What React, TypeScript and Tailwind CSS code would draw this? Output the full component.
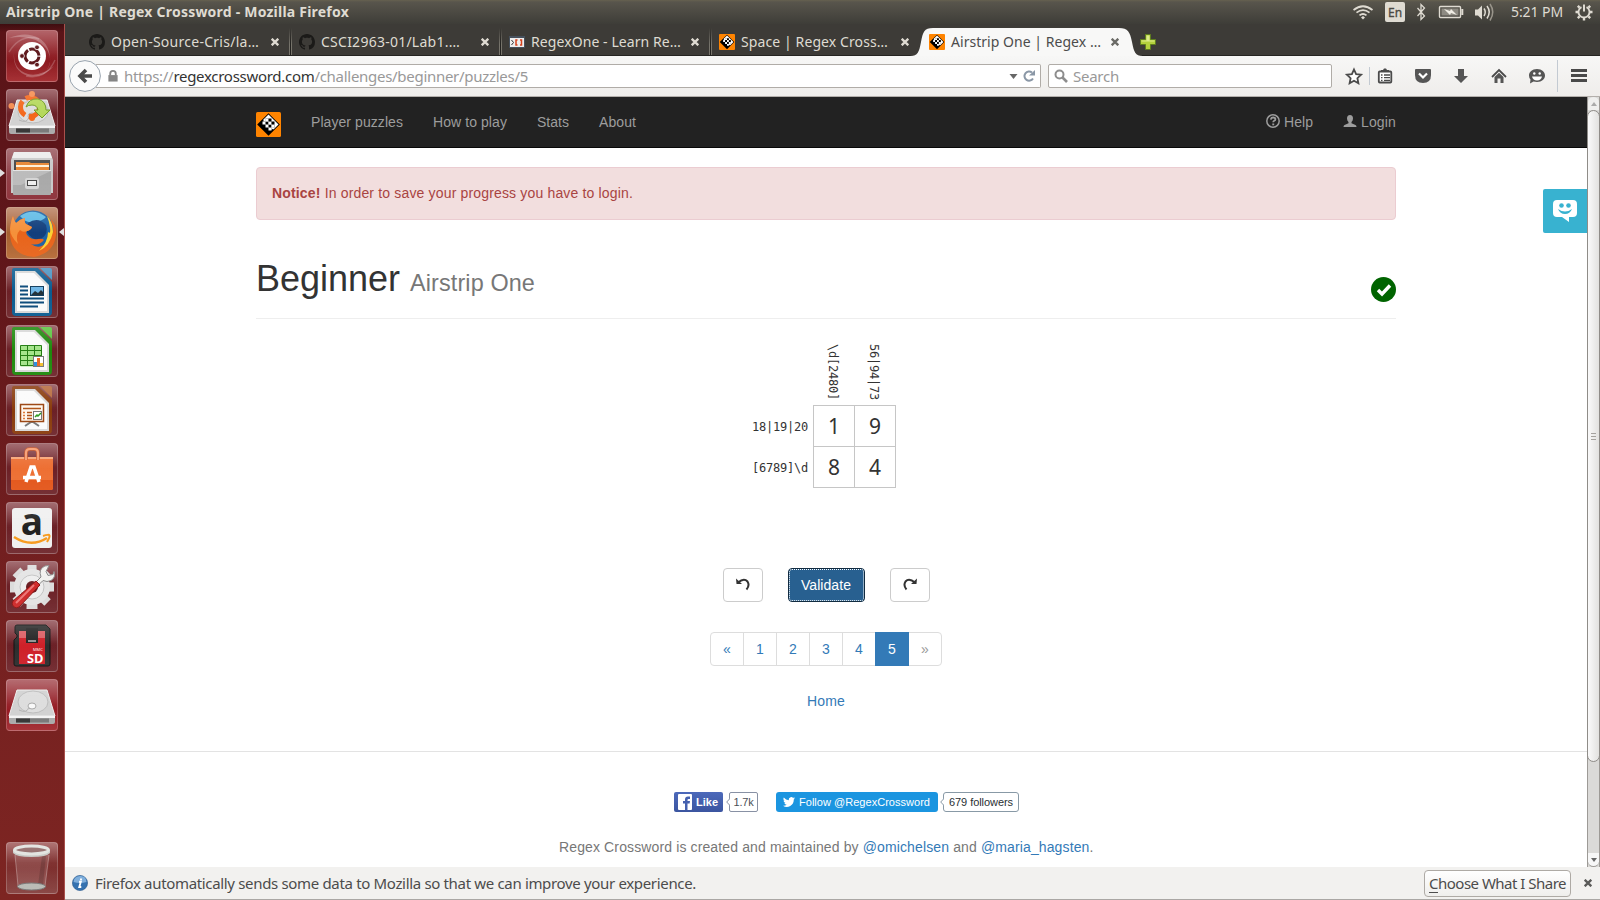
import React, { useLayoutEffect, useRef } from "react";

const UI = "font-['Noto_Sans',sans-serif]";

/* Text run whose letter spacing is adjusted so that it fills a given length. */
function Fit({ w, vertical = false, className = "", children }: { w: number; vertical?: boolean; className?: string; children: React.ReactNode }) {
  const ref = useRef<HTMLSpanElement>(null);
  useLayoutEffect(() => {
    const el = ref.current;
    if (!el) return;
    el.style.letterSpacing = "0px";
    const n = (el.textContent || "").length;
    const box = el.getBoundingClientRect();
    el.style.letterSpacing = `${(w - (vertical ? box.height : box.width)) / n}px`;
  }, [w, vertical]);
  return (
    <span ref={ref} className={`inline-block shrink-0 whitespace-pre ${className}`}>
      {children}
    </span>
  );
}

/* ---------- launcher ---------- */

function Doc({ main, light, children }: { main: string; light: string; children: React.ReactNode }) {
  return (
    <svg viewBox="0 0 52 52" className="size-[52px]">
      <path d="M8 2h24l14 14v30q0 4-4 4H10q-4 0-4-4V4q0-2 2-2z" fill={main} />
      <path d="M34 2h10q2 0 2 2v10z" fill={light} />
      <path d="M9 5h20l14 14v28H9z" fill="#d8d8d8" />
      <path d="M11 7h17l13 13v25H11z" fill="#fbfbfb" />
      <g transform="translate(0 -1)">{children}</g>
    </svg>
  );
}

const Dash = () => (
  <svg viewBox="0 0 52 52" className="size-[52px]">
    <path d="M3 8Q20 1 33 8q12 8 11 24-2 9-8 13Q50 34 40 18 28 4 3 8z" fill="#fff" fillOpacity=".25" />
    <path d="M8 22q-1 18 14 22 12 3 26-8-10 12-26 10Q6 41 8 22z" fill="#fff" fillOpacity=".25" />
    <path d="M3 22Q15 3 33 9M49 30Q40 50 20 46" fill="none" stroke="#fff" strokeOpacity=".2" strokeWidth="1.500" />
    <circle cx="26" cy="26" r="14" fill="#fff" />
    <circle cx="26" cy="26" r="7" fill="none" stroke="#5d171b" strokeWidth="3" strokeDasharray="13.2 1.46" strokeDashoffset="-.7" />
    <circle cx="16" cy="26" r="2.400" fill="#5d171b" stroke="#fff" strokeWidth=".8" />
    <circle cx="31" cy="17.300" r="2.400" fill="#5d171b" stroke="#fff" strokeWidth=".8" />
    <circle cx="31" cy="34.700" r="2.400" fill="#5d171b" stroke="#fff" strokeWidth=".8" />
  </svg>
);

const Drive = ({ installer = false }: { installer?: boolean }) => (
  <svg viewBox="0 0 52 52" className="size-[52px]">
    <path d="M11 11h30l8 26H3z" fill="#d2d2d2" stroke="#efefef" />
    <path d="M3 37h46v6q0 2-2 2H5q-2 0-2-2z" fill="#a9a9a9" />
    <path d="M3 37h46v2H3z" fill="#f4f4f4" />
    <path d="M10 39.500h33v4H10z" fill="#777" />
    <path d="M10 39.500h14v4H10z" fill="#333" />
    <ellipse cx="27" cy="23" rx="15" ry="11" fill="#dedede" stroke="#bdbdbd" />
    <ellipse cx="26" cy="27" rx="4" ry="3" fill="#f9f9f9" stroke="#aaa" />
    <path d="M13 31q8 4 10-3" fill="none" stroke="#b4b4b4" />
    {installer && (
      <g>
        <circle cx="24" cy="18" r="9.500" fill="none" stroke="#f4681c" strokeWidth="5" strokeDasharray="16 4" />
        <circle cx="5.500" cy="17" r="3" fill="#f58b4d" />
        <circle cx="26" cy="5" r="3" fill="#f58b4d" />
        <circle cx="26" cy="29" r="3" fill="#f4681c" />
        <path d="M20 18q3-9 12-8 8 2 8 11h4l-8 8-8-8h4q-1-5-6-5-4 0-6 2z" fill="#b5d95c" stroke="#6f9a23" />
      </g>
    )}
  </svg>
);

const Files = () => (
  <svg viewBox="0 0 52 52" className="size-[52px]">
    <path d="M8 4h36l3 8v33H5V12z" fill="#c9c9c9" />
    <path d="M8 4h36l2 6H6z" fill="#ececec" />
    <path d="M8 12h36v12H8z" fill="#444" />
    <path d="M10 14h13l2 1h18v9H10z" fill="#e7842f" />
    <path d="M10 17h33v2H10z" fill="#fff1d8" />
    <path d="M7 22h38v24q0 1-1 1H8q-1 0-1-1z" fill="#a9a9a9" />
    <path d="M7 22h38v1H7z" fill="#e4e4e4" />
    <path d="M7 23h38l-30 14H7z" fill="#bcbcbc" />
    <rect x="19" y="30" width="14" height="11" rx="2" fill="#d6d6d6" />
    <rect x="21.500" y="32.500" width="9" height="5" fill="#eee" stroke="#444" />
  </svg>
);

const Firefox = () => (
  <svg viewBox="0 0 52 52" className="size-[52px]">
    <circle cx="27" cy="24" r="20.500" fill="#1b62a5" />
    <path d="M14 9Q27 0 40 10q-4 5-12 4-6 4-14-5z" fill="#5fbbe6" />
    <path d="M22 16q10-7 18 2 3 9-5 14-9 2-14-7z" fill="#123f7d" />
    <path d="M7 9q1 5 3 7 4-4 9-5-1 4 1 6l6 3q-1 3-5 4-2 2 1 5 4 4 10 3 5-1 6 1-5 6-13 4 8 6 15-1 6-7 4-17 3 3 3 7 1-8-3-14 7 5 6 16-2 18-22 22Q4 48 4 26 4 15 7 9z" fill="#e8641b" />
    <path d="M7 9q1 5 3 7 4-4 9-5-1 4 1 6l6 3q-1 3-5 4-4 2-7-1-5 5-2 14-8-8-8-15 1-9 3-13z" fill="#f5913a" />
    <path d="M41 9q6 6 6 16-3 14-14 19 9-9 9-19 3 3 2-5-1-6-3-11z" fill="#fcd233" />
  </svg>
);

const Bag = () => (
  <svg viewBox="0 0 52 52" className="size-[52px]">
    <path d="M5 14h42v31q0 2-2 2H7q-2 0-2-2z" fill="#ee7034" />
    <path d="M5 14h42v2H5z" fill="#f8a679" />
    <path d="M5 37h42v8q0 2-2 2H7q-2 0-2-2z" fill="#e4571b" />
    <path d="M20 17v-7q0-4 4-4h4q4 0 4 4v7" fill="none" stroke="#c95020" strokeWidth="3.500" />
    <path d="M20 17v-7q0-4 4-4h4q4 0 4 4v7" fill="none" stroke="#f69a6e" strokeWidth="2.200" />
    <path d="M20 39l5-15h3l5 15M17 34.500h18" fill="none" stroke="#fff" strokeWidth="3.500" />
  </svg>
);

const Amazon = () => (
  <svg viewBox="0 0 52 52" className="size-[52px]">
    <rect x="6" y="6" width="40" height="40" rx="3" fill="#f0f0f0" />
    <text x="26" y="33" textAnchor="middle" fontSize="37" fontWeight="bold" fontFamily="Open Sans" fill="#202020">a</text>
    <path d="M8 35q17 11 33 1" fill="none" stroke="#f79a1c" strokeWidth="2.500" />
    <path d="M37 34q6-2 6.500-.500T41 40" fill="none" stroke="#f79a1c" strokeWidth="2" />
  </svg>
);

const Settings = () => (
  <svg viewBox="0 0 52 52" className="size-[52px]">
    {[0, 45, 90, 135].map((a) => (
      <path key={a} d="M21.500 4h9l1 44H20.500z" fill="#dcdcdc" transform={`rotate(${a} 26 26)`} />
    ))}
    <circle cx="26" cy="26" r="18" fill="#e4e4e4" />
    <circle cx="26" cy="26" r="12" fill="#eee" stroke="#c4c4c4" />
    <circle cx="26" cy="26" r="6" fill="#6a1d22" />
    <path d="M27 24l8-8q-3-8 4-11l4-.500-3 6 2 4 5-1 1-3q2 6-3 9-4 2-8 0l-7 7z" fill="#f2f2ef" stroke="#858585" />
    <path d="M30 20l4 4-21 22q-3 2-5.500-.500T7 40z" fill="#cf2a2a" stroke="#8d1414" />
    <path d="M28 24L10 42" stroke="#ee7777" strokeWidth="2" />
  </svg>
);

const SdCard = () => (
  <svg viewBox="0 0 52 52" className="size-[52px]">
    <path d="M11 5h29l4 4v35q0 2-2 2H10q-2 0-2-2V20l3-3v-2l-2-2V7q0-2 2-2z" fill="#2e2e2e" stroke="#111" />
    <path d="M13 11h26v33H13z" fill="#cf2129" />
    <path d="M13 11h26v7H13z" fill="#dd6066" />
    <path d="M20 8h12v15H20z" fill="#252525" />
    <path d="M22 21h8" stroke="#bbb" strokeWidth="1.500" />
    <text x="27" y="31" fontSize="4" fontFamily="Open Sans" fill="#fff">MMC</text>
    <text x="21" y="42.500" fontSize="12.500" fontWeight="bold" fontFamily="Open Sans" fill="#fff" textLength="16.500" lengthAdjust="spacingAndGlyphs">SD</text>
  </svg>
);

const Trash = () => (
  <svg viewBox="0 0 52 52" className="size-[52px]">
    <path d="M9 13h34l-4 31q-13 6-27 0z" fill="#fff" fillOpacity=".12" />
    <path d="M36 14h4l-3 29h-5z" fill="#000" fillOpacity=".15" />
    <path d="M9 13l3 31M43 13l-4 31" stroke="#fff" strokeOpacity=".3" />
    <ellipse cx="25.500" cy="44.500" rx="14" ry="3.500" fill="#b9bab5" stroke="#777" />
    <path d="M7 8v3q3 4 18.500 4T44 11V8z" fill="#c4c6c2" />
    <ellipse cx="25.500" cy="8" rx="17" ry="4" fill="#8d6463" stroke="#e0e2de" strokeWidth="3" />
  </svg>
);

function Tile({ bg, children }: { bg: string; children: React.ReactNode }) {
  return (
    <div className={`relative size-[52px] shrink-0 rounded-[4px] ${bg}`}>
      {children}
      <div className="pointer-events-none absolute inset-0 rounded-[4px] border border-white/20 bg-linear-to-b from-white/15 via-white/0 to-white/5" />
    </div>
  );
}

const PLAIN = "bg-[linear-gradient(#94555b_0%,#6c2127_45%,#6f262b_100%)]";

function Launcher() {
  return (
    <aside className="relative flex w-[65px] shrink-0 flex-col items-start gap-[7px] border-r border-[#a9504c] bg-[linear-gradient(#3f0d10_0px,#5b1418_8px,#5f161a_220px,#742020_560px,#7d2522_876px)] pt-[6px] pb-[6px] pl-[6px]">
      <Tile bg="bg-[linear-gradient(#a64a50,#8c191f_60%,#a3282c)]"><Dash /></Tile>
      <Tile bg={PLAIN}><Drive installer /></Tile>
      <Tile bg="bg-[linear-gradient(#9a5a60,#8b2c35)]"><Files /></Tile>
      <Tile bg="bg-[linear-gradient(#bb8365,#a55f31_50%,#b66b36)]"><Firefox /></Tile>
      <Tile bg={PLAIN}>
        <Doc main="#0b5c91" light="#4a93c2">
          <path d="M14 21.500h8M14 25.500h8M14 29.500h8M14 33.500h24M14 37.500h24M14 41.500h18" stroke="#0b4a7a" strokeWidth="2" />
          <rect x="24.500" y="21.500" width="13" height="9" fill="#6fb6e6" stroke="#123c5c" />
          <path d="M25 30l4-4 3 2 3-3 2 2v3z" fill="#24323a" />
        </Doc>
      </Tile>
      <Tile bg={PLAIN}>
        <Doc main="#1f8a0d" light="#5ac53f">
          <path d="M14.500 21.500h21v21h-21z" fill="#a5e58b" />
          <path d="M14.500 21.500h21v20h-21zM14.500 26.500h21M14.500 31.500h21M14.500 36.500h21M21.500 21.500v20M28.500 21.500v20" fill="none" stroke="#237c12" />
          <rect x="27.500" y="32.500" width="10" height="10" fill="#fff" stroke="#777" />
          <path d="M28 38h3v4h-3z" fill="#2d8fe0" />
          <path d="M31 34h3v8h-3z" fill="#ea6a25" />
          <path d="M34 39h3v3h-3z" fill="#f4c12e" />
        </Doc>
      </Tile>
      <Tile bg={PLAIN}>
        <Doc main="#8a3c0d" light="#b76a3c">
          <path d="M19 43l6-4h2l6 4" fill="none" stroke="#777" strokeWidth="2" />
          <rect x="14.500" y="21.500" width="23" height="17" fill="#fff7ee" stroke="#9a4410" strokeWidth="1.500" />
          <path d="M17 25.500h18M21 29.500h5M21 32.500h5M21 35.500h5" stroke="#b1541a" strokeWidth="1.600" />
          <path d="M17 29.500h2M17 32.500h2M17 35.500h2" stroke="#e07b39" strokeWidth="1.600" />
          <rect x="27.500" y="28.500" width="8" height="8" fill="#fff" stroke="#777" />
          <path d="M29 34l2-2 1 1 3-3" fill="none" stroke="#2e9d22" strokeWidth="1.500" />
        </Doc>
      </Tile>
      <Tile bg={PLAIN}><Bag /></Tile>
      <Tile bg={PLAIN}><Amazon /></Tile>
      <Tile bg={PLAIN}><Settings /></Tile>
      <Tile bg={PLAIN}><SdCard /></Tile>
      <Tile bg="bg-[linear-gradient(#a9545a,#951a22_60%,#a22a30)]"><Drive /></Tile>
      <div className="mt-auto"><Tile bg="bg-[linear-gradient(#a25e5e,#7d2d2c_40%,#86403e)]"><Trash /></Tile></div>
      <svg viewBox="0 0 64 876" className="pointer-events-none absolute top-0 left-0 h-[876px] w-16">
        <path d="M0 145l5 4-5 4zM0 204l5 4-5 4zM64 204l-5 4 5 4z" fill="#dfdfdf" />
      </svg>
    </aside>
  );
}

/* ---------- top panel ---------- */

function Panel() {
  return (
    <header className="flex h-6 shrink-0 items-center bg-[linear-gradient(#66614f_0px,#58554c_2px,#3e3d38_24px)] pl-[6px] text-[#dfdbd2]">
      <Fit w={343} className={`${UI} text-[14px] leading-6 font-bold`}>Airstrip One | Regex Crossword - Mozilla Firefox</Fit>
      <svg viewBox="0 0 149 24" className="mr-0 ml-auto h-6 w-[149px] shrink-0">
        <g fill="none" stroke="#dfdbd2" strokeWidth="1.700">
          <path d="M.5 10q9.500-7.500 19 0M3.500 12.700q6.500-5 13 0M6.500 15.400q3.500-2.800 7 0" />
          <path d="M64.500 8l7 8-3.500 3.500v-15l3.500 3.500-7 8" strokeWidth="1.300" />
          <rect x="86.500" y="6.500" width="21" height="11" rx="1" strokeWidth="1.400" />
          <path d="M109.300 9v6" strokeWidth="2" />
          <path d="M131 8.500q2.500 3.500 0 7.500M134 6q4.500 6 0 12.500" strokeWidth="1.500" />
          <path d="M137 4q5.500 8 0 16.500" strokeWidth="1.500" stroke="#99958b" />
        </g>
        <rect x="88.500" y="8.500" width="17" height="7" fill="#8d8a82" />
        <path d="M91 9l6 2 1-2 6 6-6-2-1 2z" fill="#efece4" />
        <path d="M8 17.500l2-1.500 2 1.500-2 2z" fill="#dfdbd2" />
        <path d="M122 9.500h3l4-4v14l-4-4h-3z" fill="#dfdbd2" />
        <rect x="32" y="2" width="20" height="20" rx="2" fill="#dfdbd2" />
        <text x="42" y="17" textAnchor="middle" fontSize="12" fill="#4b4943" stroke="#4b4943" strokeWidth=".3" fontFamily="Noto Sans">En</text>
      </svg>
      <Fit w={52} className={`${UI} ml-[9px] text-[14px] leading-6`}>5:21 PM</Fit>
      <svg viewBox="0 0 18 18" className="mr-[7px] ml-[12px] h-[18px] w-[18px] shrink-0" fill="none" stroke="#dfdbd2">
        <path d="M6.500 4.100a5.500 5.500 0 1 0 5 0" strokeWidth="1.800" />
        <path d="M9 1.500v7" strokeWidth="2" />
        <path d="M9 15v2.500M.5 9h2.500M15 9h2.500M2.800 2.800l1.800 1.800M13.400 4.600l1.800-1.800M2.800 15.200l1.800-1.800M13.400 13.400l1.800 1.800" strokeWidth="2.400" />
      </svg>
    </header>
  );
}

/* ---------- browser chrome ---------- */

const Logo = ({ className }: { className: string }) => (
  <svg viewBox="0 0 25 25" className={className}>
    <rect width="25" height="25" rx="1.500" fill="#ff8400" />
    <path d="M12.500 1.200l11.300 11.300-11.300 11.300L1.200 12.500z" fill="#000" />
    <path d="M7.500 7.500l5-5 10 10-5 5z" fill="#fff" />
    <path d="M9.500 6.500h3v3h-3zM12.500 9.500h3v3h-3zM15.500 12.500h3v3h-3z" fill="#000" />
    <path d="M9.500 9.500h3v3h-3zM12.500 12.500h3v3h-3zM6.500 9.500h3v3h-3zM9.500 12.500h3v3h-3zM12.500 15.500h3v3h-3z" fill="#fff" />
    <path d="M9.500 9.500h3v3h-3zM12.500 12.500h3v3h-3z" fill="#000" />
    <path d="M7.500 7.500l2-1v3h-2zM12.500 6.500h3v3h-3zM15.500 9.500h3v3h-3zM15.500 15.500h2.500l-2.500 2.500z" fill="#fff" />
    <path d="M12.500 9.500h3v3h-3zM9.500 6.500h3v3h-3zM15.500 12.500h3v3h-3z" fill="#fff" />
    <path d="M12.500 6.500h3v3h-3zM15.500 9.500h3v3h-3z" fill="#000" />
  </svg>
);

const Github = () => (
  <svg viewBox="0 0 16 16" className="size-4">
    <path fill="#1b1a18" d="M8 0C3.580 0 0 3.580 0 8c0 3.540 2.290 6.530 5.470 7.590.4.070.55-.17.55-.38 0-.19-.01-.82-.01-1.490-2.010.37-2.530-.49-2.690-.94-.09-.23-.48-.94-.82-1.130-.28-.15-.68-.52-.01-.53.63-.01 1.080.58 1.230.82.72 1.210 1.870.87 2.330.66.070-.52.28-.87.51-1.070-1.780-.2-3.640-.89-3.640-3.950 0-.87.31-1.590.82-2.150-.08-.2-.36-1.020.08-2.120 0 0 .67-.21 2.200.82.64-.18 1.320-.27 2-.27s1.360.09 2 .27c1.530-1.040 2.200-.82 2.200-.82.44 1.100.16 1.920.08 2.120.51.56.82 1.270.82 2.150 0 3.070-1.870 3.750-3.650 3.950.29.25.54.73.54 1.480 0 1.070-.01 1.930-.01 2.200 0 .21.15.46.55.38A8.010 8.010 0 0 0 16 8c0-4.420-3.580-8-8-8z" />
  </svg>
);

const RegexOne = () => (
  <svg viewBox="0 0 16 16" className="size-4">
    <rect y="2" width="16" height="12" fill="#46505c" />
    <rect x="1" y="4" width="14" height="9" fill="#eee" />
    <path d="M2.500 6l2 2.500-2 2.500" fill="none" stroke="#333" />
    <path d="M8.500 6H7v5h1.500M11 6h1.500v5H11" fill="none" stroke="#d5421d" strokeWidth="1.500" />
  </svg>
);

const Close = ({ color }: { color: string }) => (
  <svg viewBox="0 0 8 8" className="size-2 shrink-0">
    <path d="M.7.700l6.600 6.600M7.300.700L.7 7.300" stroke={color} strokeWidth="2.300" />
  </svg>
);

const TABS = [
  { icon: <Github />, title: "Open-Source-Cris/la…", w: 148 },
  { icon: <Github />, title: "CSCI2963-01/Lab1.…", w: 139 },
  { icon: <RegexOne />, title: "RegexOne - Learn Re…", w: 150 },
  { icon: <Logo className="size-4" />, title: "Space | Regex Cross…", w: 147 },
  { icon: <Logo className="size-4" />, title: "Airstrip One | Regex …", w: 150 },
];

function TabStrip() {
  return (
    <div className="flex h-8 shrink-0 items-stretch border-b border-[#262522] bg-[#3d3b37] pl-[15px]">
      {TABS.map((t, i) => {
        const on = i === 4;
        return (
          <div key={t.title} className="relative flex w-[210px] shrink-0 items-center pt-[5px] pr-[11px] pl-[9px]">
            {on && (
              <svg viewBox="0 0 236 28" className="absolute top-1 -left-[12px] h-7 w-[236px]">
                <path d="M2 28c8 0 9-4 11-14S16 0 25 0h186c9 0 11 4 13 14s3 14 11 14z" fill="#f8f8f7" />
              </svg>
            )}
            {i < 3 && <div className="absolute right-[-2px] bottom-0 h-[27px] w-[3px] border-x border-[#77746b] bg-[#23221f] [mask-image:linear-gradient(transparent,black_60%)]" />}
            <div className="relative mr-[6px]">{t.icon}</div>
            <Fit w={t.w} className={`${UI} relative text-[14px] leading-5 ${on ? "text-[#4c4c4c]" : "text-[#dfdbd2]"}`}>{t.title}</Fit>
            <div className="relative ml-auto"><Close color={on ? "#6a6a66" : "#dfdbd2"} /></div>
          </div>
        );
      })}
      <svg viewBox="0 0 16 16" className="mt-[10px] ml-[10px] size-4">
        <path d="M5.500.5h5v5h5v5h-5v5h-5v-5h-5v-5h5z" fill="#b4d13d" stroke="#5e7d1e" />
        <path d="M6.500 1.500h3v5h5v1h-13v-1h5z" fill="#dcea8c" />
      </svg>
    </div>
  );
}

function Toolbar() {
  return (
    <div className="flex h-[41px] shrink-0 items-center border-b border-[#b3afab] bg-linear-to-b from-[#f7f7f6] to-[#efedeb] pl-1">
      <svg viewBox="0 0 32 32" className="relative size-8 shrink-0">
        <circle cx="16" cy="16" r="15.400" fill="#fbfbfb" stroke="#98a3ae" />
        <path d="M23 16H12M17 10l-6 6 6 6" fill="none" stroke="#4a4a4a" strokeWidth="3.600" />
      </svg>
      <div className="-ml-[5px] flex h-6 w-[945px] shrink-0 items-center rounded-r-[2px] border border-l-0 border-[#b0aca7] bg-white pr-[4px] pl-[11px]">
        <svg viewBox="0 0 12 13" className="mr-[5px] size-[12px] shrink-0">
          <path d="M3 6V4q0-3 3-3t3 3v2" fill="none" stroke="#858585" strokeWidth="2" />
          <rect x="1" y="5.500" width="10" height="7" fill="#858585" />
        </svg>
        <Fit w={404} className={`${UI} text-[15px] leading-5 text-[#999]`}>
          https://<span className="text-[#333]">regexcrossword.com</span>/challenges/beginner/puzzles/5
        </Fit>
        <svg viewBox="0 0 28 14" className="ml-auto h-[14px] w-[28px] shrink-0">
          <path d="M1.500 5h8l-4 5z" fill="#666" />
          <path d="M25 9.500A4.600 4.600 0 1 1 24 3.500" fill="none" stroke="#8a97a6" strokeWidth="2" />
          <path d="M21 6.500h6V1z" fill="#8a97a6" />
        </svg>
      </div>
      <div className="ml-[7px] flex h-6 w-[284px] shrink-0 items-center rounded-[2px] border border-[#b0aca7] bg-white pl-[5px]">
        <svg viewBox="0 0 14 14" className="mr-[5px] size-[14px]" fill="none" stroke="#8d8d8d">
          <circle cx="5.500" cy="5.500" r="4" strokeWidth="2" />
          <path d="M8.500 8.500L13 13" strokeWidth="2.600" />
        </svg>
        <Fit w={46} className={`${UI} text-[15px] leading-5 text-[#999]`}>Search</Fit>
      </div>
      <svg viewBox="1332 60 268 32" className="h-8 w-[268px] shrink-0">
        <path d="M1354 69.500l2.100 4.700 5 .5-3.700 3.500 1 5-4.400-2.500-4.400 2.500 1-5-3.700-3.500 5-.5z" fill="#fff" stroke="#4a4a4a" strokeWidth="1.800" />
        <path d="M1369.500 67v18M1557.500 60v32" stroke="#c3cad2" />
        <rect x="1378.800" y="71.500" width="12.500" height="11" rx="1" fill="#fff" stroke="#4a4a4a" strokeWidth="1.800" />
        <path d="M1381 71.500v-1.500h2l1-1.500h2l1 1.500h2v1.500z" fill="#4a4a4a" />
        <path d="M1381 75h1.500M1384 75h6M1381 77.700h1.500M1384 77.700h6M1381 80.400h1.500M1384 80.400h6" stroke="#4a4a4a" strokeWidth="1.300" />
        <path d="M1416 69h14q1 0 1 1v5q0 8-8 8t-8-8v-5q0-1 1-1z" fill="#555" />
        <path d="M1419 73.500l4 4 4-4" fill="none" stroke="#fff" strokeWidth="2.200" />
        <path d="M1458 69h6v7h4l-7 7-7-7h4z" fill="#555" />
        <path d="M1492 77l7-7 7 7" fill="none" stroke="#4a4a4a" strokeWidth="1.800" />
        <path d="M1494.500 77l4.500-4.300 4.500 4.300v6h-3v-4.500h-3v4.500h-3z" fill="#555" />
        <path d="M1537 69c5 0 8 3 8 6.500s-3 6.500-8 6.500l-3.500-.5-3.500 2 .5-4q-1.500-1.500-1.500-4c0-3.500 3-6.500 8-6.500z" fill="#555" />
        <path d="M1532 76.500h10q-1 4-5 4t-5-4z" fill="#fff" />
        <circle cx="1534.300" cy="73.500" r="1.200" fill="#fff" />
        <circle cx="1539.700" cy="73.500" r="1.200" fill="#fff" />
        <path d="M1571 70.500h16M1571 75.500h16M1571 80.500h16" stroke="#4a4a4a" strokeWidth="2.800" />
      </svg>
    </div>
  );
}

/* ---------- page ---------- */

function Navbar() {
  return (
    <nav className="flex h-[51px] shrink-0 items-start border-b border-[#080808] bg-[#222] px-[191px] text-sm leading-5 text-[#9d9d9d]">
      <Logo className="mt-[15px] mr-[30px] size-[25px]" />
      <div className="flex pt-[15px]">
        <Fit w={92} className="mr-[30px]">Player puzzles</Fit>
        <Fit w={74} className="mr-[30px]">How to play</Fit>
        <Fit w={32} className="mr-[30px]">Stats</Fit>
        <Fit w={37}>About</Fit>
      </div>
      <div className="ml-auto flex pt-[15px]">
        <svg viewBox="0 0 14 14" className="mt-[2px] mr-1 size-[14px]" fill="none" stroke="#9d9d9d">
          <circle cx="7" cy="7" r="6.200" strokeWidth="1.500" />
          <path d="M4.800 5.600q.2-2.100 2.300-2.100 2.300 0 2.300 1.700 0 1-1.200 1.600-1 .5-1 1.500" strokeWidth="1.800" />
          <path d="M6.300 10.400H8.200" strokeWidth="1.800" />
        </svg>
        <Fit w={29} className="mr-[30px]">Help</Fit>
        <svg viewBox="0 0 14 14" className="mt-[2px] mr-1 size-[14px]">
          <path d="M7 1q3 0 3 3.500 0 2-1.500 3.500v1.200l4 1.800q1 .5 1 2h-13q0-1.500 1-2l4-1.800V8Q4 6.500 4 4.500 4 1 7 1z" fill="#9d9d9d" />
        </svg>
        <Fit w={35}>Login</Fit>
      </div>
    </nav>
  );
}

function Cell({ children }: { children: string }) {
  return (
    <div className="-mt-px -mr-px flex size-[42px] shrink-0 items-center justify-center border border-[#c6c6c6] font-['Noto_Sans',sans-serif] text-[21px] leading-none text-[#333]">
      {children}
    </div>
  );
}

function Crossword() {
  const mono = "font-['DejaVu_Sans_Mono',monospace] text-[12px] leading-[41px] text-[#333]";
  return (
    <div className="mt-[25px] flex flex-col">
      <div className="flex h-[62px] pl-[747px]">
        {["\\d[2480]", "56|94|73"].map((c) => (
          <div key={c} className="flex w-[41px] items-end pb-[6px]">
            <Fit w={56} vertical className={`${mono} [writing-mode:vertical-rl]`}>{c}</Fit>
          </div>
        ))}
      </div>
      {[["18|19|20", "1", "9"], ["[6789]\\d", "8", "4"]].map(([clue, a, b]) => (
        <div key={clue} className="flex h-[41px]">
          <div className="flex w-[748px] shrink-0 justify-end pt-[1px] pr-[5px]">
            <Fit w={56} className={mono}>{clue}</Fit>
          </div>
          <Cell>{a}</Cell>
          <Cell>{b}</Cell>
        </div>
      ))}
    </div>
  );
}

function Puzzle() {
  const icon = "flex h-[34px] w-10 items-center justify-center rounded-[4px] border border-[#ccc] bg-white";
  const page = "flex h-[34px] w-[33px] items-center justify-center border-l border-[#ddd]";
  return (
    <main className="flex h-[770px] flex-col overflow-hidden bg-white font-['Liberation_Sans',sans-serif] text-sm leading-5 text-[#333]">
      <Navbar />
      <div className="mx-[191px] mt-[19px] flex h-[53px] items-center rounded-[4px] border border-[#ebccd1] bg-[#f2dede] pb-[2px] pl-[15px] text-[#a94442]">
        <Fit w={361}><b>Notice!</b> In order to save your progress you have to login.</Fit>
      </div>
      <div className="mx-[191px] mt-[36px] flex h-[63px] border-b border-[#eee]">
        <Fit w={144} className="text-[36px] leading-[46px]">Beginner</Fit>
        <Fit w={125} className="ml-[10px] pt-[4px] text-[23.400px] leading-[46px] text-[#777]">Airstrip One</Fit>
        <svg viewBox="0 0 25 25" className="mt-[21px] ml-auto size-[25px]">
          <circle cx="12.500" cy="12.500" r="12.500" fill="#006400" />
          <path d="M7 13l4 4 8-8.500" fill="none" stroke="#fff" strokeWidth="3.400" />
        </svg>
      </div>
      <Crossword />
      <div className="mt-[80px] flex justify-center gap-[25px]">
        <div className={icon}>
          <svg viewBox="0 0 14 14" className="mb-[2px] size-[14px]">
            <path d="M2 5.500Q8 .5 11.500 4.500q2.500 4-1 8" fill="none" stroke="#333" strokeWidth="2" />
            <path d="M0 1.500l.5 5.500h5.500z" fill="#333" />
          </svg>
        </div>
        <div className="flex h-[34px] w-[77px] items-center justify-center rounded-[4px] border border-[#122b40] bg-[#286090] text-white">
          <div className="flex h-8 w-[75px] items-center justify-center rounded-[3px] border border-dotted border-white"><Fit w={50}>Validate</Fit></div>
        </div>
        <div className={icon}>
          <svg viewBox="0 0 14 14" className="mb-[2px] size-[14px] -scale-x-100">
            <path d="M2 5.500Q8 .5 11.500 4.500q2.500 4-1 8" fill="none" stroke="#333" strokeWidth="2" />
            <path d="M0 1.500l.5 5.500h5.500z" fill="#333" />
          </svg>
        </div>
      </div>
      <div className="mt-[30px] flex justify-center">
        <div className="flex h-[34px] w-[232px] items-center rounded-[4px] border border-[#ddd] text-[#337ab7]">
          <div className="flex w-8 justify-center">«</div>
          {["1", "2", "3", "4"].map((n) => <div key={n} className={page}>{n}</div>)}
          <div className="flex h-[34px] w-[34px] items-center justify-center bg-[#337ab7] text-white">5</div>
          <div className="flex flex-1 justify-center text-[#999]">»</div>
        </div>
      </div>
      <div className="mt-[25px] flex justify-center text-[#337ab7]"><Fit w={38}>Home</Fit></div>
      <div className="mt-[40px] border-t border-[#e3e3e3]" />
      <div className="mt-[40px] ml-[609px] flex h-5 items-center text-[11px] leading-5">
        <div className="flex h-5 w-[49px] items-center rounded-[2px] bg-linear-to-b from-[#4c69ba] to-[#3b55a0] pl-1 font-bold text-white">
          <svg viewBox="0 0 14 16" className="mr-1 h-4 w-[14px]">
            <rect width="14" height="16" rx="1" fill="#fff" />
            <path d="M7 16V9.500H5V7h2V5.500Q7 2.500 10 2.500h2V5h-1.500Q9.500 5 9.500 6v1H12l-.4 2.500H9.500V16z" fill="#4460ae" />
          </svg>
          <Fit w={22}>Like</Fit>
        </div>
        <svg viewBox="0 0 4 20" className="relative z-10 ml-[3px] -mr-px h-5 w-[4px]">
          <path d="M4 6.500L.7 10 4 13.500" fill="#fff" stroke="#8891a4" />
        </svg>
        <div className="flex h-5 w-[29px] items-center justify-center rounded-[2px] border border-[#8891a4] text-[#4b4f56]"><Fit w={20}>1.7k</Fit></div>
        <div className="ml-[18px] flex h-5 w-[162px] items-center rounded-[3px] bg-[#1b95e0] pl-[7px] text-white">
          <svg viewBox="0 0 24 24" className="mr-1 size-[12px]">
            <path fill="#fff" d="M24 4.600a10 10 0 0 1-2.800.8 5 5 0 0 0 2.100-2.700 10 10 0 0 1-3.100 1.200 4.900 4.900 0 0 0-8.400 4.500A14 14 0 0 1 1.700 3.100a4.900 4.900 0 0 0 1.500 6.600 5 5 0 0 1-2.200-.6 4.900 4.900 0 0 0 4 4.900 5 5 0 0 1-2.300.1 4.900 4.900 0 0 0 4.600 3.400A10 10 0 0 1 0 19.500 14 14 0 0 0 21.500 7.100 10 10 0 0 0 24 4.600z" />
          </svg>
          <Fit w={131}>Follow @RegexCrossword</Fit>
        </div>
        <svg viewBox="0 0 4 20" className="relative z-10 ml-[2px] -mr-px h-5 w-[4px]">
          <path d="M4 6.500L.7 10 4 13.500" fill="#fff" stroke="#8899a6" />
        </svg>
        <div className="flex h-5 w-[76px] items-center justify-center rounded-[3px] border border-[#8899a6] text-[#292f33]"><Fit w={64}>679 followers</Fit></div>
      </div>
      <div className="mt-[25px] ml-[494px] flex text-[#777]">
        <Fit w={534.500}>
          Regex Crossword is created and maintained by <span className="text-[#337ab7]">@omichelsen</span> and <span className="text-[#337ab7]">@maria_hagsten</span>.
        </Fit>
      </div>
    </main>
  );
}

function Scrollbar() {
  return (
    <div className="flex w-[13px] shrink-0 flex-col border-x border-[#9d9a96] bg-[#dbdad8]">
      <div className="flex h-[13px] items-center justify-center rounded-t-full bg-[#efefee]">
        <svg viewBox="0 0 6 4" className="h-1 w-1.5"><path d="M0 4l3-4 3 4z" fill="#aaa" /></svg>
      </div>
      <div className="-mx-px flex h-[652px] flex-col items-center justify-center gap-[2px] rounded-full border border-[#8f8c88] bg-linear-to-r from-[#fafafa] to-[#e2e1df]">
        {[0, 1, 2].map((k) => <div key={k} className="h-px w-[5px] bg-[#a5a29e]" />)}
      </div>
      <div className="flex-1" />
      <div className="flex h-[14px] items-center justify-center rounded-b-full border-b border-[#9d9a96] bg-[#f7f7f7]">
        <svg viewBox="0 0 6 4" className="h-1 w-1.5"><path d="M0 0l3 4 3-4z" fill="#666" /></svg>
      </div>
    </div>
  );
}

function Notification() {
  return (
    <div className="flex h-[33px] shrink-0 items-center border-b border-[#aaa7a4] bg-[#f2f1ef] pr-[8px] pl-[7px] text-[#4c4c4c]">
      <svg viewBox="0 0 16 16" className="mr-[7px] size-4">
        <circle cx="8" cy="8" r="7.600" fill="#3572b0" stroke="#28598d" strokeWidth=".6" />
        <path d="M1.500 7Q2 1.500 8 1t6.500 6Q8 9 1.500 7z" fill="#7faedb" />
        <path d="M7 6.700h1.800L7.300 12h2M9 3.500v1.700" fill="none" stroke="#fff" strokeWidth="1.900" />
      </svg>
      <Fit w={601} className={`${UI} text-[15px] leading-5`}>Firefox automatically sends some data to Mozilla so that we can improve your experience.</Fit>
      <div className="mr-[13px] ml-auto flex h-[27px] w-[147px] items-center justify-center rounded-[4px] border border-[#aeaaa5] bg-linear-to-b from-white to-[#efeeec]">
        <Fit w={137} className={`${UI} text-[15px] leading-5`}><span className="underline underline-offset-[3px]">C</span>hoose What I Share</Fit>
      </div>
      <Close color="#5a5a58" />
    </div>
  );
}

export default function App() {
  return (
    <div className="flex h-[900px] w-[1600px] flex-col overflow-hidden bg-white">
      <Panel />
      <div className="flex min-h-0 flex-1">
        <Launcher />
        <div className="flex min-w-0 flex-1 flex-col">
          <TabStrip />
          <Toolbar />
          <div className="flex h-[770px] shrink-0">
            <div className="w-[1522px]"><Puzzle /></div>
            <div className="relative w-0">
              <div className="absolute top-[92px] right-0 flex size-11 items-center justify-center rounded-l-[2px] bg-[#38b2d0]">
                <svg viewBox="0 0 24 22" className="h-[22px] w-6">
                  <path d="M4 0h16q4 0 4 4v9q0 4-4 4h-4v5l-7-5H4q-4 0-4-4V4q0-4 4-4z" fill="#fff" />
                  <circle cx="8.500" cy="5.500" r="2.300" fill="#38b2d0" />
                  <circle cx="15.500" cy="5.500" r="2.300" fill="#38b2d0" />
                  <path d="M5 9q7 5 14 0-2 5-7 5t-7-5z" fill="#38b2d0" />
                </svg>
              </div>
            </div>
            <Scrollbar />
          </div>
          <Notification />
        </div>
      </div>
    </div>
  );
}
